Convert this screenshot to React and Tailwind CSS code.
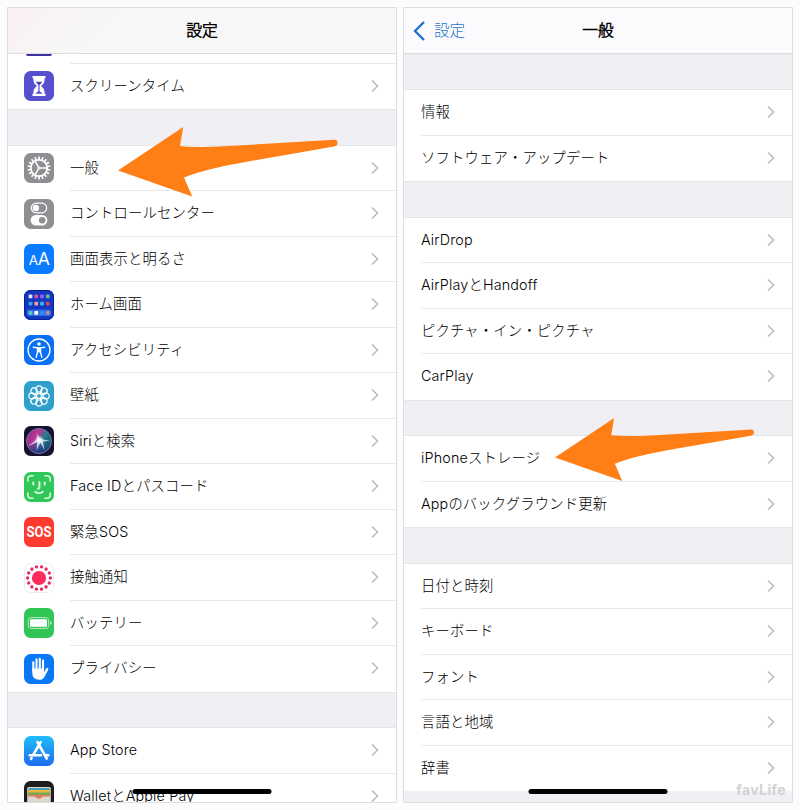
import React from "react";

const FONT = "font-['Inter','Noto_Sans_CJK_JP_Light','Noto_Sans_CJK_JP',sans-serif]";

function Tile({ children, fill }) {
  return (
    <svg viewBox="0 0 30 30" className="size-[30px] shrink-0">
      <rect width="30" height="30" rx="6.5" fill={fill} />
      {children}
    </svg>
  );
}

const ring = (n) => Array.from({ length: n }, (_, i) => (i * 360) / n);

const Hourglass = () => (
  <Tile fill="#5650cf">
    <path d="M8.500 5h13v2.200h-.9c0 4.300-1 5.800-3.600 7.800 2.600 2 3.600 3.500 3.600 7.800h.9V25h-13v-2.200h.9c0-4.300 1-5.800 3.600-7.800-2.600-2-3.600-3.500-3.600-7.800h-.9z" fill="#fff" />
    <path d="M11.500 10.800h7L15.600 14v6l3.100 2.700h-7.400l3.100-2.700v-6z" fill="#5650cf" />
    <path d="M12.800 11.600h4.400L15 14z" fill="#3c35a8" />
  </Tile>
);

const Gear = () => (
  <Tile fill="#8e8e93">
    <g stroke="#fff" fill="none">
      {ring(18).map((a) => (
        <path key={a} d="M15 3.500V6.500" strokeWidth="1.700" transform={`rotate(${a} 15 15)`} />
      ))}
      <circle cx="15" cy="15" r="8.200" strokeWidth="1.800" />
      <circle cx="15" cy="15" r="1.200" strokeWidth="1.200" />
      {[90, 210, 330].map((a) => (
        <path key={a} d="M15 13.500V7" strokeWidth="1.500" transform={`rotate(${a} 15 15)`} />
      ))}
    </g>
  </Tile>
);

const Toggles = () => (
  <Tile fill="#8e8e93">
    <rect x="7.300" y="4.200" width="15.400" height="9.600" rx="4.800" fill="none" stroke="#fff" strokeWidth="1.200" />
    <circle cx="11.900" cy="9" r="3.200" fill="#fff" />
    <rect x="6.600" y="16" width="16.800" height="10.400" rx="5.200" fill="#fff" />
    <circle cx="18.200" cy="21.200" r="3.300" fill="#8e8e93" />
  </Tile>
);

const TextSize = () => (
  <Tile fill="#0a7aff">
    <text x="4.800" y="21.300" fontSize="13.500" fontWeight="400" fill="#fff">A</text>
    <text x="13.700" y="21.300" fontSize="17.500" fontWeight="400" fill="#fff">A</text>
  </Tile>
);

const DOTS = ["#dbe5ff", "#d0559c", "#a05ce8", "#72b39b", "#3ba6ee", "#f0a08a", "#3db5e8", "#d5435c", "#56cbc1", "#ffffff", "#2d8df0", "#b88c98"];

const HomeScreen = () => (
  <Tile fill="#1237c0">
    <rect x="0.500" y="0.500" width="29" height="29" rx="6" fill="none" stroke="#0a1f9a" />
    <rect x="3" y="19.500" width="24" height="6.500" rx="2" fill="#2f6ce5" />
    {DOTS.map((c, i) => (
      <rect key={i} x={4.600 + (i % 4) * 5.750} y={[4.500, 11.700, 21][Math.floor(i / 4)]} width="3.800" height="3.800" rx="0.900" fill={c} />
    ))}
  </Tile>
);

const Accessibility = () => (
  <Tile fill="#0a70f5">
    <circle cx="15" cy="15" r="11" fill="none" stroke="#fff" strokeWidth="1.300" />
    <circle cx="15" cy="9" r="1.800" fill="#fff" />
    <path d="M9.300 12.200l4.200.7v4.300l-1.300 5.200M20.700 12.200l-4.200.7v4.300l1.300 5.200" fill="none" stroke="#fff" strokeWidth="1.400" strokeLinecap="round" strokeLinejoin="round" />
    <path d="M13 12.200h4v5.200h-4z" fill="#fff" />
  </Tile>
);

const Flower = () => (
  <Tile fill="#2f9fcc">
    <g fill="none" stroke="#fff" strokeWidth="1.200">
      {ring(8).map((a) => (
        <circle key={a} cx="15" cy="7.900" r="3.100" transform={`rotate(${a} 15 15)`} />
      ))}
      {ring(8).map((a) => (
        <path key={a} d="M15 9.500V13" transform={`rotate(${a + 22.500} 15 15)`} />
      ))}
      <circle cx="15" cy="15" r="2.500" />
    </g>
  </Tile>
);

const Siri = () => (
  <Tile fill="#15122f">
    <defs>
      <linearGradient id="orb" x1="0" y1="0.200" x2="1" y2="0.700">
        <stop offset="0" stopColor="#8d2f91" />
        <stop offset="0.350" stopColor="#c03494" />
        <stop offset="0.650" stopColor="#247c8f" />
        <stop offset="1" stopColor="#144e68" />
      </linearGradient>
      <linearGradient id="orbShade" x1="0" y1="0" x2="0" y2="1">
        <stop offset="0.500" stopColor="#263584" stopOpacity="0" />
        <stop offset="1" stopColor="#26317c" />
      </linearGradient>
      <radialGradient id="glow">
        <stop offset="0" stopColor="#fff" />
        <stop offset="0.300" stopColor="#fff" stopOpacity="0.700" />
        <stop offset="1" stopColor="#fff" stopOpacity="0" />
      </radialGradient>
    </defs>
    <circle cx="15" cy="15" r="12.500" fill="url(#orb)" />
    <circle cx="15" cy="15" r="12.500" fill="url(#orbShade)" stroke="#7c7ba0" strokeWidth="0.900" />
    <path d="M4 20q6-4 9.500-7.500L12.500 7l3 4.800 3.500 1.600 7 1.400-7 .7 1.500 8.500-4.200-7.500-3.600 8 .3-8.500Q9 18.500 4 20z" fill="#d8e4f5" opacity="0.850" />
    <circle cx="15.300" cy="14" r="5" fill="url(#glow)" />
  </Tile>
);

const FaceId = () => (
  <Tile fill="#31c759">
    <g fill="none" stroke="#d9fbe0" strokeWidth="1.600" strokeLinecap="round">
      <path d="M3.800 9V7.300Q3.800 3.800 7.300 3.800H9M21 3.800h1.700q3.500 0 3.500 3.500V9M26.200 21v1.700q0 3.500-3.500 3.500H21M9 26.200H7.300q-3.500 0-3.500-3.500V21" />
      <path d="M9.300 10.500v2M20.700 10.500v2M15.400 10v5.400q0 1.300-1.500 1.300M11.200 19.700q3.800 2.800 7.600 0" strokeWidth="1.900" />
    </g>
  </Tile>
);

const Sos = () => (
  <span className="flex size-[30px] shrink-0 items-center justify-center rounded-[6.5px] bg-[#ff3b30] font-['Roboto',sans-serif] text-[13px] leading-5 font-bold text-white">
    <span className="scale-y-[1.15]">SOS</span>
  </span>
);

const Exposure = () => (
  <Tile fill="#fff">
    <rect x="0.500" y="0.500" width="29" height="29" rx="6" fill="none" stroke="#ededed" />
    <circle cx="15" cy="15" r="7.100" fill="#fb2c5b" />
    {ring(14).map((a) => (
      <circle key={a} cx="15" cy="3.600" r="1.700" fill="#e92b62" transform={`rotate(${a + 12.900} 15 15)`} />
    ))}
  </Tile>
);

const Battery = () => (
  <Tile fill="#30c554">
    <rect x="4.300" y="9.600" width="20.400" height="10.800" rx="2.800" fill="none" stroke="#b9edc6" strokeWidth="1" />
    <rect x="6" y="11.300" width="17" height="7.400" rx="1.300" fill="#fff" />
    <path d="M26 13v4q1.700-.6 1.700-2T26 13z" fill="#b9edc6" />
  </Tile>
);

const Hand = () => (
  <Tile fill="#0a78f5">
    <g fill="none" stroke="#fff" strokeWidth="2.100" strokeLinecap="round">
      <path d="M9.300 16.500V8.200M12.500 15V5.400M15.800 15V4.800M19 16V6.600M20 20.500l3.300-5.700" />
    </g>
    <path d="M8.250 14.500h11.800v3.700l3.200-3.500 1 .9-3.700 7.100q-1.500 3.100-5.200 3.100-7.100 0-7.100-7.300z" fill="#fff" />
  </Tile>
);

const AppStore = () => (
  <Tile fill="url(#store)">
    <defs>
      <linearGradient id="store" x1="0" y1="0" x2="0" y2="1">
        <stop stopColor="#1fbdf8" />
        <stop offset="1" stopColor="#1d6cf0" />
      </linearGradient>
    </defs>
    <g stroke="#fff" strokeWidth="2.600" strokeLinecap="round" fill="none">
      <path d="M16.700 6.200L9.700 18M13.500 6.200l9.200 16.300M5.700 19.300h11.200M21.500 19.300h2.900M7.600 22l-.5.800" />
    </g>
  </Tile>
);

const Wallet = () => (
  <Tile fill="#1e1c1f">
    <rect x="3.200" y="6" width="23.600" height="24" rx="1.500" fill="#ddd8ce" />
    <path d="M4 8.500q0-1.500 1.500-1.500h19q1.500 0 1.500 1.500V10H4z" fill="#4c9dbc" />
    <path d="M4 9h22v3H4z" fill="#e5b53d" />
    <path d="M4 11.500h22v2.500H4z" fill="#72a957" />
    <path d="M4 14h22v1.500h-6.500q-1 0-1.800 1.200-2.700 2-5.400 0Q11.500 15.500 10 15.500H4z" fill="#e8795c" />
  </Tile>
);

function Chevron() {
  return (
    <svg viewBox="0 0 8 14" className="h-[14px] w-2 shrink-0" fill="none" stroke="#bcbcc0" strokeWidth="1.600">
      <path d="M1 1.500L6.500 7 1 12.500" />
    </svg>
  );
}

function Row({ label, icon: Icon, last }) {
  return (
    <div className={`flex h-[45.5px] shrink-0 items-center bg-white ${Icon ? "pl-4" : "pl-[17px]"}`}>
      {Icon && <span className="mr-4 flex"><Icon /></span>}
      <div className={`flex h-full min-w-0 flex-1 items-center justify-between border-b pr-[17px] ${last ? "border-transparent" : "border-[#e9e9eb]"}`}>
        <span className="text-[14.35px] leading-none font-[350] tracking-[0.15px] whitespace-nowrap text-black">{label}</span>
        <Chevron />
      </div>
    </div>
  );
}

function Group({ rows }) {
  return (
    <div className="flex shrink-0 flex-col">
      {rows.map(([label, icon], i) => (
        <Row key={label} label={label} icon={icon} last={i === rows.length - 1} />
      ))}
    </div>
  );
}

const Gap = () => <div className="h-[36.5px] shrink-0 border-y border-[#e6e6e9] bg-[#f0eff4]" />;

const HomeBar = () => (
  <div className="absolute bottom-[8px] left-1/2 h-[5px] w-[139px] -translate-x-1/2 rounded-full bg-black" />
);

function Arrow({ className }) {
  return (
    <svg viewBox="0 0 220 70" className={className} fill="#ff7f16">
      <path d="M0 43.500L65.200 0 62 19Q82 21 120 18.500L216 12.700Q219.500 12.500 219.500 16 219.500 18.700 216 19.500L130 34.500Q87 42 66 50.500L74.200 69.500z" />
    </svg>
  );
}

const system = [
  ["一般", Gear],
  ["コントロールセンター", Toggles],
  ["画面表示と明るさ", TextSize],
  ["ホーム画面", HomeScreen],
  ["アクセシビリティ", Accessibility],
  ["壁紙", Flower],
  ["Siriと検索", Siri],
  ["Face IDとパスコード", FaceId],
  ["緊急SOS", Sos],
  ["接触通知", Exposure],
  ["バッテリー", Battery],
  ["プライバシー", Hand],
];

const general = [
  [["情報"], ["ソフトウェア・アップデート"]],
  [["AirDrop"], ["AirPlayとHandoff"], ["ピクチャ・イン・ピクチャ"], ["CarPlay"]],
  [["iPhoneストレージ"], ["Appのバックグラウンド更新"]],
  [["日付と時刻"], ["キーボード"], ["フォント"], ["言語と地域"], ["辞書"]],
];

export default function App() {
  return (
    <div lang="ja" className={`relative flex h-[810px] w-[800px] gap-[6px] overflow-hidden bg-[#fcfcfc] px-[7px] pt-[7px] pb-[7px] ${FONT}`}>
      <section className="relative flex w-[390px] flex-col overflow-hidden border border-[#dedee0] bg-white">
        <header className="flex h-[46px] shrink-0 items-center justify-center border-b border-[#dcdcdf] bg-[linear-gradient(135deg,#faf0f3_0%,#f7f7f7_25%)]">
          <h1 className="text-[15.8px] leading-none font-bold text-black">設定</h1>
        </header>
        <div className="flex h-[9.5px] shrink-0 bg-white pl-4">
          <div className="h-[2px] w-[30px] px-[2px]"><div className="h-full rounded-b-full bg-[#3e309f]" /></div>
          <div className="ml-4 flex-1 border-b border-[#e9e9eb]" />
        </div>
        <Group rows={[["スクリーンタイム", Hourglass]]} />
        <Gap />
        <Group rows={system} />
        <Gap />
        <Group rows={[["App Store", AppStore], ["WalletとApple Pay", Wallet]]} />
        <HomeBar />
      </section>
      <section className="relative flex w-[390px] flex-col overflow-hidden border border-[#dedee0] bg-white">
        <header className="grid h-[46px] shrink-0 grid-cols-3 items-center border-b border-[#dcdcdf] bg-[#fbfbfd]">
          <div className="flex items-center gap-[9px] pl-[9px] text-[#1f74cb]">
            <svg viewBox="0 0 12 20" className="h-5 w-3" fill="none" stroke="#1b6fd0" strokeWidth="2.300">
              <path d="M11 1L2 10l9 9" />
            </svg>
            <span className="text-[15.6px] leading-none">設定</span>
          </div>
          <h1 className="text-center text-[15.8px] leading-none font-bold text-black">一般</h1>
        </header>
        <div className="-mt-[0.5px] flex flex-1 flex-col">
          {general.map((rows, i) => (
            <React.Fragment key={i}>
              <Gap />
              <Group rows={rows} />
            </React.Fragment>
          ))}
          <div className="flex-1 bg-[#f0eff4]" />
        </div>
        <HomeBar />
        <span className="absolute right-[6px] bottom-[5px] text-[14px] leading-none font-bold tracking-[0.4px] text-[#d2d2d5]">favLife</span>
      </section>
      <Arrow className="absolute top-[126.5px] left-[117.5px] h-[70px] w-[220px]" />
      <Arrow className="absolute top-[417.5px] left-[554.5px] h-[63.5px] w-[199.5px]" />
    </div>
  );
}
